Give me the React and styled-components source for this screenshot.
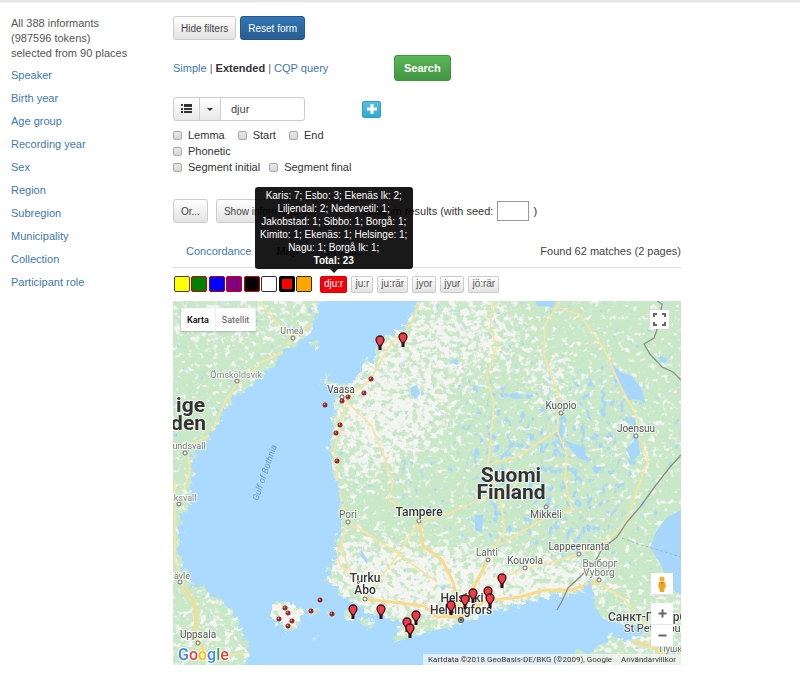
import React from "react";
import styled, { createGlobalStyle } from "styled-components";

const GlobalStyle = createGlobalStyle`
  * {
    box-sizing: border-box;
  }
  body {
    margin: 0;
    background: #fff;
    color: #444;
    font-family: "Liberation Sans", Arial, sans-serif;
    font-size: 11px;
    line-height: 15px;
  }
  button,
  input {
    font-family: inherit;
  }
  a {
    color: #4179ad;
    text-decoration: none;
  }
`;

const Page = styled.div`
  display: grid;
  grid-template-columns: 162px 1fr;
  min-height: 100vh;
  padding: 14px 119px 23px 11px;
  border-top: 2px solid #e6e6e6;
  box-shadow: inset 0 1px 1px #f3f3f3;
`;

const Sidebar = styled.aside`
  p {
    margin: 0 0 7px;
    color: #555;
  }
  ul {
    margin: 0;
    padding: 0;
    list-style: none;
  }
  li {
    margin-bottom: 8px;
  }
`;

const Main = styled.main`
  min-width: 0;
`;

const Row = styled.div`
  display: flex;
  align-items: center;
  gap: ${(props) => props.$gap || 4}px;
  height: ${(props) => props.$height || 24}px;
  margin-bottom: ${(props) => props.$after || 0}px;
`;

const Button = styled.button`
  height: 24px;
  padding: 0 7px;
  border: 1px solid #ccc;
  border-radius: 3px;
  background: linear-gradient(#fff, #e2e2e2);
  color: #444;
  font-size: 10px;
  white-space: nowrap;
`;

const PrimaryButton = styled(Button)`
  border-color: #265787;
  background: linear-gradient(#3277b5, #285d8f);
  color: #fff;
`;

const SearchButton = styled(Button)`
  height: 26px;
  padding: 0 9px;
  border-color: #3f943f;
  background: linear-gradient(#5ab65a, #429742);
  color: #fff;
  font-size: 11px;
  font-weight: bold;
`;

const Modes = styled.nav`
  width: 217px;
  color: #666;
  strong {
    color: #333;
  }
`;

const InputGroup = styled.div`
  display: flex;
  width: 132px;
  height: 24px;
`;

const GroupButton = styled.button`
  display: flex;
  align-items: center;
  justify-content: center;
  width: ${(props) => props.$width}px;
  margin-right: -1px;
  padding: 0;
  border: 1px solid #ccc;
  border-radius: ${(props) => (props.$first ? "3px 0 0 3px" : "0")};
  background: linear-gradient(#fff, #e8e8e8);
`;

const WordInput = styled.input`
  flex: 1;
  min-width: 0;
  padding: 0 10px;
  border: 1px solid #ccc;
  border-radius: 0 3px 3px 0;
  color: #444;
  font-size: 11px;
`;

const AddButton = styled.button`
  display: flex;
  align-items: center;
  justify-content: center;
  width: 19px;
  height: 17px;
  margin-left: 53px;
  padding: 0;
  border: 1px solid #2f9dbb;
  border-radius: 2px;
  background: linear-gradient(#57bfdf, #2fabd0);
`;

const Check = styled.label`
  display: flex;
  align-items: center;
  gap: 6px;
  color: #333;
  input {
    appearance: none;
    width: 9px;
    height: 9px;
    margin: 0;
    border: 1px solid #aaa;
    border-radius: 2px;
    background: linear-gradient(#e6e6e6, #d8d8d8);
  }
`;

const NumberInput = styled.input`
  width: ${(props) => props.$width}px;
  height: 20px;
  margin: 0;
  padding: 0 4px;
  border: 1px solid #999;
`;

const SeedLabel = styled.label`
  display: flex;
  align-items: center;
  gap: 4px;
  color: #333;
  white-space: nowrap;
`;

const ResultBar = styled.div`
  display: flex;
  align-items: center;
  height: 33px;
  margin-bottom: 8px;
  border-bottom: 1px solid #ddd;
`;

const Tabs = styled.nav`
  display: flex;
  flex: 1;
  gap: 25px;
  padding-left: 13px;
  strong {
    color: #555;
  }
`;

const VariantBar = styled.div`
  display: flex;
  align-items: center;
  height: 16px;
  margin-bottom: 9px;
`;

const Swatches = styled.div`
  display: flex;
  justify-content: space-between;
  width: 138px;
  margin: 0 8px 0 1px;
`;

const Swatch = styled.button`
  width: 16px;
  height: 16px;
  padding: 0;
  border: ${(props) => (props.$active ? 3 : 1)}px solid ${(props) => props.$edge};
  border-radius: 2px;
  background: ${(props) => props.$color};
`;

const Variants = styled.div`
  display: flex;
  gap: 4px;
`;

const VariantItem = styled.div`
  position: relative;
`;

const Variant = styled.button`
  display: block;
  height: 17px;
  padding: 0 3px;
  border: 1px solid ${(props) => (props.$active ? "#e00000" : "#ccc")};
  border-radius: 2px;
  background: ${(props) => (props.$active ? "#f5000a" : "linear-gradient(#fff, #e2e2e2)")};
  color: ${(props) => (props.$active ? "#fff" : "#555")};
  font-size: 10px;
  line-height: 14px;
`;

const Tooltip = styled.div`
  position: absolute;
  z-index: 2;
  bottom: calc(100% + 7px);
  left: 50%;
  width: 158px;
  padding: 2px 5px;
  border-radius: 3px;
  background: rgba(0, 0, 0, 0.9);
  color: #fff;
  font-size: 10px;
  line-height: 13px;
  text-align: center;
  transform: translateX(-50%);
  &::after {
    content: "";
    position: absolute;
    top: 100%;
    left: 50%;
    margin-left: -4px;
    border: 4px solid transparent;
    border-top-color: #1a1a1a;
    border-bottom: 0;
  }
  span,
  strong {
    display: block;
    white-space: nowrap;
  }
`;

const MapFrame = styled.section`
  position: relative;
  height: 364px;
  overflow: hidden;
  background: #aadaff;
  font-family: Roboto, sans-serif;
  > svg {
    display: block;
    width: 100%;
    height: 100%;
  }
`;

const MapTypes = styled.div`
  position: absolute;
  top: 7px;
  left: 8px;
  display: flex;
  box-shadow: 0 1px 2px rgba(0, 0, 0, 0.2);
`;

const MapType = styled.button`
  height: 23px;
  padding: 0 6px;
  border: 0;
  border-right: 1px solid #eee;
  background: #fff;
  color: ${(props) => (props.$active ? "#000" : "#555")};
  font-size: 9px;
  font-weight: ${(props) => (props.$active ? 500 : 400)};
`;

const Fullscreen = styled.button`
  position: absolute;
  top: 9px;
  right: 12px;
  width: 19px;
  height: 19px;
  padding: 3px;
  border: 0;
  background: #fff;
  svg {
    display: block;
  }
`;

const MapTools = styled.div`
  position: absolute;
  right: 8px;
  bottom: 18px;
  display: flex;
  flex-direction: column;
  width: 22px;
`;

const MapTool = styled.button`
  display: flex;
  align-items: center;
  justify-content: center;
  height: 22px;
  margin-bottom: ${(props) => props.$after || 0}px;
  padding: 0;
  border: 0;
  border-bottom: 1px solid #e6e6e6;
  background: #fff;
`;

const Attribution = styled.footer`
  position: absolute;
  right: 0;
  bottom: 0;
  display: flex;
  gap: 9px;
  padding: 0 5px;
  background: rgba(245, 245, 245, 0.75);
  color: #333;
  font-size: 8px;
  line-height: 11px;
  white-space: nowrap;
  a {
    color: #333;
  }
`;

const filters = [
  "Speaker",
  "Birth year",
  "Age group",
  "Recording year",
  "Sex",
  "Region",
  "Subregion",
  "Municipality",
  "Collection",
  "Participant role",
];

const swatches = [
  ["#ffff00", "#444"],
  ["#008000", "#c00"],
  ["#0000ff", "#a00"],
  ["#800080", "#c00"],
  ["#000", "#c00"],
  ["#fff", "#333"],
  ["#ff0000", "#000"],
  ["#ffa500", "#333"],
];

const places = [
  "Karis: 7; Esbo: 3; Ekenäs lk: 2;",
  "Liljendal: 2; Nedervetil: 1;",
  "Jakobstad: 1; Sibbo: 1; Borgå: 1;",
  "Kimito: 1; Ekenäs: 1; Helsinge: 1;",
  "Nagu: 1; Borgå lk: 1;",
];

const pins = [
  [380, 341], [403, 338], [353, 610], [381, 610], [416, 616], [407, 623],
  [410, 629], [451, 606], [465, 600], [473, 594], [488, 592], [490, 599],
  [502, 579],
];

const dots = [
  [325, 405], [342, 401], [348, 397], [340, 425], [336, 433], [337, 461],
  [371, 379], [364, 393], [285, 608], [288, 613], [279, 619], [292, 621],
  [288, 626], [311, 611], [320, 600], [332, 614],
];

// x, baseline, size, text, colour
const labels = [
  [292, 334, 9, "Umeå", "#777"],
  [236, 378, 9, "Örnsköldsvik", "#888"],
  [189, 449, 9, "undsvall", "#777"],
  [184, 501, 9, "iksvall", "#888"],
  [182, 579, 9, "ävle", "#777"],
  [198, 638, 10, "Uppsala", "#555"],
  [341, 393, 10, "Vaasa", "#444"],
  [348, 518, 10, "Pori", "#666"],
  [561, 409, 10, "Kuopio", "#555"],
  [636, 432, 10, "Joensuu", "#555"],
  [546, 518, 10, "Mikkeli", "#555"],
  [487, 556, 10, "Lahti", "#666"],
  [525, 564, 10, "Kouvola", "#555"],
  [579, 550, 10, "Lappeenranta", "#555"],
  [600, 567, 10, "Выборг", "#777"],
  [599, 576, 10, "Vyborg", "#777"],
  [676, 652, 9, "Пушкин", "#666"],
  [456, 666, 10, "Tallinn", "#888"],
];

const cities = [
  [419, 516, 12, "Tampere"],
  [365, 582, 12, "Turku"],
  [365, 594, 12, "Åbo"],
  [462, 602, 12, "Helsinki"],
  [461, 614, 12, "Helsingfors"],
];

const towns = [
  [293, 338], [237, 381], [185, 453], [179, 504], [180, 582], [198, 643],
  [342, 397], [348, 522], [561, 413], [636, 436], [546, 507], [488, 560],
  [525, 568], [579, 554], [599, 580], [419, 521], [365, 599],
];

const roads = [
  "M325 301L311 325L293 338L283 352L262 362L237 384L226 400L210 435L185 447L175 450",
  "M260 301Q272 320 293 338M188 455L190 470L184 490M175 480L175 560L183 586L195 604L196 640L206 662M173 650L198 660L250 652",
  "M421 301L410 325L390 345L371 379L348 397L340 425L334 450L338 485L347 522L341 548L352 575L365 599",
  "M346 401L371 425L382 450L393 485M419 521L393 562L365 596M348 522L393 550L437 582",
  "M493 301L490 330L497 345L487 375L494 405L488 465L520 455L558 430",
  "M488 465L500 500L505 530L488 560L465 600M500 500L525 476",
  "M560 301L545 325L544 355L560 400L557 430L567 455L565 480L572 510L546 517L500 545",
  "M560 308L580 315L605 350L620 385L636 415L638 435L648 460L637 490",
  "M637 490L625 525L600 545L579 554L550 563L525 568L510 575",
  "M393 480L389 500L419 518",
  "M600 583L625 600L645 625L660 640",
  "M341 545Q330 558 350 575M419 521L450 513L500 490",
];

const mainRoads = [
  "M365 599L400 603L425 606L437 617L462 616L485 601L520 597L545 590L570 590L598 582",
  "M419 521L423 546L442 560L453 582L460 610M487 562L475 585L462 612",
  "M183 586L195 604L196 640L205 650M633 643L650 645L665 655",
];

const areas = {
  sweden:
    "M165 295H325L311 327L298 345L283 353L272 366L253 386L233 396L220 419L210 439L193 453L191 483L190 507L182 513L180 560L190 583L220 597L237 617L245 637L250 652L242 672H165Z",
  finland:
    "M420 292L407 326L383 338L367 366L358 379L337 388L335 402L334 418L331 443L332 463L339 484L340 500L339 530L335 557L327 577L340 595L355 602L372 614L385 616L396 622L408 621L390 643L412 637L437 629L460 624L483 614L520 605L557 596L583 595L587 580L595 593L593 610L610 620L630 627L652 630L634 634L633 645L613 634L603 643L587 653L570 652L565 672H690V292Z",
  islands:
    "M270 612L278 602L292 603L303 612L297 630L280 629ZM308 610L316 607L314 617ZM326 610L335 611L330 618ZM342 610L357 610L354 621L344 621ZM360 619L374 621L372 629L362 626ZM325 376L337 381L345 391L330 390L323 383ZM314 343L318 340L317 350L314 350ZM314 637L320 634L317 640ZM396 630L403 628L401 634Z",
};

function Land() {
  return (
    <g filter="url(#rough)">
      <path d={areas.sweden} />
      <path d={areas.finland} />
      <path d={areas.islands} />
    </g>
  );
}

function Pin({ x, y }) {
  return (
    <g transform={`translate(${x} ${y})`}>
      <path d="M0 3V9" stroke="#2b0a0a" strokeWidth="3" />
      <path
        d="M0 6C-1 4-4 2-4 -1A4 4 0 0 1 4 -1C4 2 1 4 0 6Z"
        fill="#f23a4b"
        stroke="#3a1216"
        strokeWidth="1.3"
      />
    </g>
  );
}

function FinlandMap() {
  const region = {
    x: 165,
    y: 293,
    width: 524,
    height: 380,
    filterUnits: "userSpaceOnUse",
    colorInterpolationFilters: "sRGB",
  };
  return (
    <svg viewBox="173 301 508 364" preserveAspectRatio="xMidYMid slice" role="img" aria-label="Karta">
      <defs>
        <filter id="rough" {...region}>
          <feTurbulence type="fractalNoise" baseFrequency="0.13" numOctaves="3" seed="4" result="n" />
          <feDisplacementMap in="SourceGraphic" in2="n" scale="16" xChannelSelector="R" yChannelSelector="G" />
        </filter>
        <filter id="fields" {...region}>
          <feGaussianBlur in="SourceGraphic" stdDeviation="14" result="d" />
          <feTurbulence type="fractalNoise" baseFrequency="0.16 0.19" numOctaves="3" seed="11" result="n" />
          <feComposite in="n" in2="d" operator="arithmetic" k1="0" k2="1" k3="0.4" k4="0" />
          <feColorMatrix values="0 0 0 0 .955  0 0 0 0 .96  0 0 0 0 .94  0 0 0 6 -3.5" />
        </filter>
        <filter id="lakes" {...region}>
          <feGaussianBlur in="SourceGraphic" stdDeviation="14" result="d" />
          <feTurbulence type="fractalNoise" baseFrequency="0.15 0.12" numOctaves="3" seed="29" result="n" />
          <feComposite in="n" in2="d" operator="arithmetic" k1="0" k2="1" k3="0.4" k4="0" />
          <feColorMatrix values="0 0 0 0 .65  0 0 0 0 .84  0 0 0 0 .98  0 0 0 7 -5" />
        </filter>
        <mask id="land" maskUnits="userSpaceOnUse" x="173" y="301" width="508" height="364">
          <g fill="#fff">
            <Land />
          </g>
        </mask>
      </defs>
      <rect x="173" y="301" width="508" height="364" fill="#aadaff" />
      <g mask="url(#land)">
        <rect x="173" y="301" width="508" height="364" fill="#c9e8c8" />
        <g filter="url(#fields)" fill="#000">
          <path d="M330 370L420 301L510 301L530 350L460 380L450 430L400 470L340 490Z" opacity=".5" />
          <path d="M340 390L400 385L440 430L380 440L340 430Z" opacity=".3" />
          <path d="M330 540L440 545L520 555L600 560L610 590L480 620L380 630L330 590Z" opacity=".65" />
          <path d="M265 595H310V635H265Z" />
          <path d="M530 350L575 360L570 410L530 400ZM610 420L660 440L640 480L615 440Z" opacity=".5" />
          <path d="M173 301H330V340H173ZM173 600H250V665H173ZM600 600H681V665H600Z" opacity=".3" />
        </g>
        <g filter="url(#lakes)" fill="#000">
          <path d="M460 370L560 380L640 370L640 480L600 540L480 540L460 450Z" opacity=".38" />
          <path d="M540 530H600V560H540ZM400 460L430 460L430 520L400 520Z" opacity=".3" />
        </g>
        <g fill="#a7d8fb">
          <path d="M411 387L417 385L420 394L415 399L411 394ZM452 359L459 360L457 365L452 363ZM610 362L622 373L632 376L642 390L646 404L637 399L628 400L619 383Z" />
          <path d="M534 301L556 301L553 307L537 306ZM630 415L637 425L640 455L632 461L626 449L634 441ZM561 418L565 430L561 441L568 455L557 443ZM475 515L483 515L482 533L475 530ZM361 550L368 560L367 564L360 555ZM564 440L580 446L590 462L578 458ZM660 356L668 359L665 364L659 361Z" />
          <path d="M685 508L667 517L657 530L650 547L660 563L673 590L685 597Z" />
        </g>
        <g fill="none" stroke="#fbe3a0" strokeWidth="1.6" strokeLinejoin="round">
          {roads.map((d) => (
            <path key={d} d={d} />
          ))}
        </g>
        <g fill="none" stroke="#fadb8b" strokeWidth="3" strokeLinejoin="round">
          {mainRoads.map((d) => (
            <path key={d} d={d} />
          ))}
        </g>
      </g>
      <g fill="none" stroke="#8a9088" strokeWidth="1.3">
        <path d="M657 301L662 304L661 310L664 318L658 327L654 338L644 344L650 354L662 367L673 372L681 380M681 455L670 467L656 485L640 507L627 522L617 537L602 549L595 562L580 577L568 588L562 601L557 610" />
        <path d="M622 538L638 544L655 549L681 557" stroke="#a6b7bd" strokeWidth="1" strokeDasharray="3 2" />
      </g>
      <text transform="translate(258 501) rotate(-71)" fill="#6b94c2" fontSize="9" fontStyle="italic">
        Gulf of Bothnia
      </text>
      <g fill="#fff" stroke="#666" strokeWidth="1">
        {towns.map(([x, y]) => (
          <circle key={`${x}-${y}`} cx={x} cy={y} r="2" />
        ))}
      </g>
      <g textAnchor="middle" stroke="#fff" strokeOpacity=".7" strokeWidth="2" paintOrder="stroke">
        {labels.map(([x, y, size, text, fill]) => (
          <text key={text} x={x} y={y} fontSize={size} fill={fill}>
            {text}
          </text>
        ))}
        {cities.map(([x, y, size, text]) => (
          <text key={text} x={x} y={y} fontSize={size} fill="#333" fontWeight="500">
            {text}
          </text>
        ))}
        <g fill="#333" fontSize="21" fontWeight="700">
          <text x="511" y="482">Suomi</text>
          <text x="511" y="499">Finland</text>
          <text x="205" y="412" textAnchor="end">ige</text>
          <text x="206" y="430" textAnchor="end">den</text>
        </g>
        <g fill="#444" textAnchor="start">
          <text x="608" y="621" fontSize="12" fontWeight="500">Санкт-Петербург</text>
          <text x="624" y="632" fontSize="11">St Petersburg</text>
        </g>
      </g>
      <circle cx="461" cy="620" r="2.6" fill="#444" stroke="#444" />
      <circle cx="461" cy="620" r="1.8" fill="none" stroke="#ccc" strokeWidth=".8" />
      {dots.map(([x, y]) => (
        <g key={`${x}-${y}`}>
          <circle cx={x} cy={y} r="2.1" fill="#c2202a" stroke="#611" strokeWidth=".8" />
          <circle cx={x - 0.7} cy={y - 0.7} r=".7" fill="#f5a0a0" />
        </g>
      ))}
      {pins.map(([x, y]) => (
        <Pin key={`${x}-${y}`} x={x} y={y} />
      ))}
      <text x="178" y="660" fontSize="16" fontWeight="500" stroke="#fff" strokeWidth="2" paintOrder="stroke">
        <tspan fill="#4285f4">G</tspan>
        <tspan fill="#ea4335">o</tspan>
        <tspan fill="#fbbc05">o</tspan>
        <tspan fill="#4285f4">g</tspan>
        <tspan fill="#34a853">l</tspan>
        <tspan fill="#ea4335">e</tspan>
      </text>
    </svg>
  );
}

function CheckBox({ children }) {
  return (
    <Check>
      <input type="checkbox" />
      {children}
    </Check>
  );
}

export default function App() {
  return (
    <>
      <GlobalStyle />
      <Page>
        <Sidebar>
          <p>
            All 388 informants
            <br />
            (987596 tokens)
            <br />
            selected from 90 places
          </p>
          <ul>
            {filters.map((name) => (
              <li key={name}>
                <a href="#filter">{name}</a>
              </li>
            ))}
          </ul>
        </Sidebar>
        <Main>
          <Row $after={15}>
            <Button>Hide filters</Button>
            <PrimaryButton>Reset form</PrimaryButton>
          </Row>
          <Row $height={26} $after={16}>
            <Modes>
              <a href="#simple">Simple</a> | <strong>Extended</strong> | <a href="#cqp">CQP query</a>
            </Modes>
            <SearchButton>Search</SearchButton>
          </Row>
          <Row $after={6}>
            <InputGroup>
              <GroupButton $width={27} $first aria-label="Menu">
                <svg width="12" height="10" viewBox="0 0 12 10" fill="#333">
                  <path d="M0 0h2v2H0zM3 0h8v3H3zM0 4h2v2H0zM3 4h8v2H3zM0 7h2v2H0zM3 7h8v2H3z" />
                </svg>
              </GroupButton>
              <GroupButton $width={22} aria-label="More">
                <svg width="6" height="3" viewBox="0 0 6 3">
                  <path d="M0 0h6L3 3z" fill="#333" />
                </svg>
              </GroupButton>
              <WordInput aria-label="Word" defaultValue="djur" />
            </InputGroup>
            <AddButton aria-label="Add">
              <svg width="10" height="10" viewBox="0 0 10 10">
                <path d="M5 0v10M0 5h10" stroke="#fff" strokeWidth="3" />
              </svg>
            </AddButton>
          </Row>
          <Row $height={16} $gap={13}>
            <CheckBox>Lemma</CheckBox>
            <CheckBox>Start</CheckBox>
            <CheckBox>End</CheckBox>
          </Row>
          <Row $height={16}>
            <CheckBox>Phonetic</CheckBox>
          </Row>
          <Row $height={16} $gap={9} $after={24}>
            <CheckBox>Segment initial</CheckBox>
            <CheckBox>Segment final</CheckBox>
          </Row>
          <Row $gap={8} $after={12}>
            <Button>Or...</Button>
            <Button>Show informants</Button>
            <NumberInput $width={42} aria-label="Number of results" />
            <SeedLabel>
              random results (with seed: <NumberInput $width={32} /> )
            </SeedLabel>
          </Row>
          <ResultBar>
            <Tabs>
              <a href="#concordance">Concordance</a>
              <strong>Map</strong>
              <a href="#statistics">Statistics</a>
            </Tabs>
            <span>Found 62 matches (2 pages)</span>
          </ResultBar>
          <VariantBar>
            <Swatches>
              {swatches.map(([color, edge]) => (
                <Swatch
                  key={color}
                  $color={color}
                  $edge={edge}
                  $active={color === "#ff0000"}
                  aria-label={color}
                />
              ))}
            </Swatches>
            <Variants>
              <VariantItem>
                <Variant $active>dju:r</Variant>
                <Tooltip role="tooltip">
                  {places.map((line) => (
                    <span key={line}>{line}</span>
                  ))}
                  <strong>Total: 23</strong>
                </Tooltip>
              </VariantItem>
              {["ju:r", "ju:rär", "jyor", "jyur", "jö:rär"].map((name) => (
                <Variant key={name}>{name}</Variant>
              ))}
            </Variants>
          </VariantBar>
          <MapFrame>
            <FinlandMap />
            <MapTypes>
              <MapType $active>Karta</MapType>
              <MapType>Satellit</MapType>
            </MapTypes>
            <Fullscreen aria-label="Fullscreen">
              <svg width="13" height="13" viewBox="0 0 13 13" fill="none" stroke="#666" strokeWidth="2">
                <path d="M1 4V1h3M9 1h3v3M12 9v3H9M4 12H1V9" />
              </svg>
            </Fullscreen>
            <MapTools>
              <MapTool $after={8} aria-label="Street View">
                <svg width="10" height="16" viewBox="0 0 10 16">
                  <circle cx="5" cy="3" r="2.6" fill="#f5b027" />
                  <path d="M2 6h6l1 5H8l-1 5H3l-1-5H1z" fill="#f0a31c" />
                  <path d="M3 6h4L5 8z" fill="#c77f12" />
                </svg>
              </MapTool>
              <MapTool aria-label="Zoom in">
                <svg width="9" height="9" viewBox="0 0 9 9">
                  <path d="M4.5 .5v8M.5 4.5h8" stroke="#666" strokeWidth="2" />
                </svg>
              </MapTool>
              <MapTool aria-label="Zoom out">
                <svg width="9" height="9" viewBox="0 0 9 9">
                  <path d="M.5 4.5h8" stroke="#666" strokeWidth="2" />
                </svg>
              </MapTool>
            </MapTools>
            <Attribution>
              <span>Kartdata ©2018 GeoBasis-DE/BKG (©2009), Google</span>
              <a href="#terms">Användarvillkor</a>
            </Attribution>
          </MapFrame>
        </Main>
      </Page>
    </>
  );
}
